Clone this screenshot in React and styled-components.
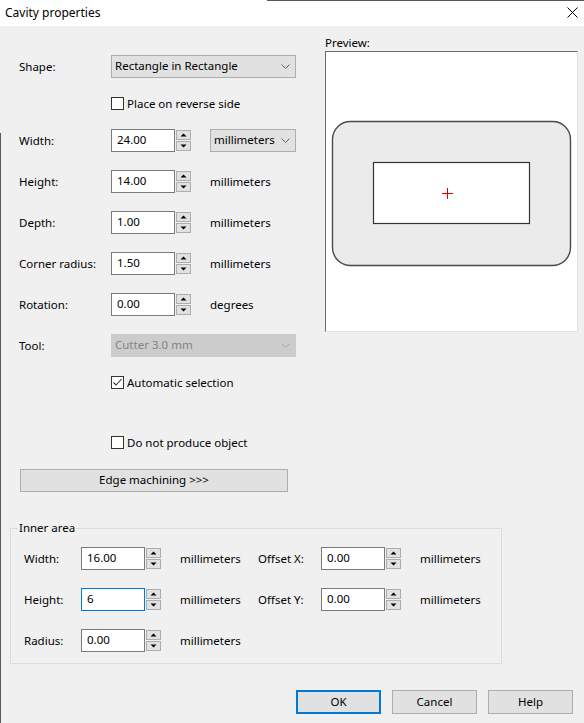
import React from 'react';
import styled, { createGlobalStyle } from 'styled-components';

const Global = createGlobalStyle`
  html, body { margin: 0; padding: 0; }
  body {
    width: 584px; height: 723px; overflow: hidden;
    background: #f0f0f0;
    font-family: "Segoe UI", "Noto Sans", sans-serif;
    font-size: 11.5px;
    color: #000;
  }
  * { box-sizing: border-box; }
`;

const Window = styled.div`
  position: relative;
  width: 584px;
  height: 723px;
  background: #f0f0f0;
  display: flex;
  flex-direction: column;
  &::before {
    content: "";
    position: absolute;
    left: 0; top: 133px; bottom: 0;
    width: 1px;
    background: #5c5c5c;
  }
`;

const TitleBar = styled.div`
  position: relative;
  height: 26px;
  flex: none;
  background: #fff;
  display: flex;
  align-items: center;
  justify-content: space-between;
  padding: 0 6px 1px 5px;
  font-size: 12px;
  &::after {
    content: "";
    position: absolute;
    top: 0; left: 267px; right: 0;
    height: 1px;
    background: #5a5a5a;
  }
`;

const Title = styled.span`
  line-height: 16px;
`;

const CloseBtn = styled.span`
  display: flex;
  width: 12px;
  height: 12px;
  align-items: center;
  justify-content: center;
`;

const TopSection = styled.div`
  display: flex;
  padding-left: 19px;
`;

const LeftCol = styled.div`
  width: 277px;
  padding-top: 29px;
  display: flex;
  flex-direction: column;
`;

const FormRow = styled.div`
  display: grid;
  grid-template-columns: 92px 1fr;
  align-items: center;
  height: 23px;
  margin-top: ${p => p.$mt || 0}px;
`;

const CheckRow = styled.label`
  display: flex;
  align-items: center;
  gap: 3px;
  height: 13px;
  margin-left: 92px;
  margin-top: ${p => p.$mt || 0}px;
  line-height: 16px;
`;

const Label = styled.span`
  line-height: 16px;
  white-space: nowrap;
`;

const Box = styled.span`
  width: 13px;
  height: 13px;
  flex: none;
  border: 1px solid #333;
  background: #fff;
  display: flex;
  align-items: center;
  justify-content: center;
`;

const Combo = styled.div`
  width: ${p => p.$w}px;
  height: 23px;
  border: 1px solid ${p => (p.$disabled ? '#cccccc' : '#adadad')};
  background: ${p => (p.$disabled ? '#cccccc' : '#e1e1e1')};
  color: ${p => (p.$disabled ? '#838383' : '#000')};
  display: flex;
  align-items: center;
  justify-content: space-between;
  padding: 0 5px 1px 3px;
  line-height: 16px;
`;

const FieldLine = styled.div`
  display: flex;
  align-items: center;
`;

const Spin = styled.div`
  display: flex;
  align-items: flex-start;
  width: ${p => p.$w || 99}px;
  flex: none;
`;

const Input = styled.div`
  width: 64px;
  height: 23px;
  border: 1px solid ${p => (p.$focus ? '#0078d7' : '#7a7a7a')};
  background: #fff;
  padding: 0 0 1px 5px;
  display: flex;
  align-items: center;
  line-height: 16px;
`;

const SpinButtons = styled.div`
  margin-left: 1px;
  padding-top: 1px;
  display: flex;
  flex-direction: column;
  gap: 1px;
`;

const SpinBtn = styled.div`
  width: 15px;
  height: 10px;
  border: 1px solid #adadad;
  background: #e1e1e1;
  display: flex;
  align-items: center;
  justify-content: center;
`;

const PreviewCol = styled.div`
  margin-left: 29px;
  padding-top: 9px;
  display: flex;
  flex-direction: column;
`;

const PreviewBox = styled.div`
  width: 253px;
  height: 281px;
  background: #fff;
  border-top: 1px solid #6d6d6d;
  border-left: 1px solid #6d6d6d;
  border-right: 1px solid #e3e3e3;
  border-bottom: 1px solid #e3e3e3;
  display: flex;
`;

const PushButton = styled.button`
  font: inherit;
  color: #000;
  width: ${p => p.$w}px;
  height: ${p => p.$h || 23}px;
  margin: 0;
  margin-left: ${p => p.$ml || 0}px;
  margin-top: ${p => p.$mt || 0}px;
  padding: 0 0 1px;
  background: #e1e1e1;
  border: ${p => (p.$default ? '2px solid #0078d7' : '1px solid #adadad')};
  border-radius: 0;
  line-height: 16px;
  text-align: center;
`;

const Group = styled.fieldset`
  margin: 28px 0 0 10px;
  width: 492px;
  border: 1px solid #dcdcdc;
  padding: 11px 0 11px 13px;
  min-width: 0;
`;

const Legend = styled.legend`
  margin-left: -6px;
  padding: 0 1px;
  line-height: 16px;
`;

const GroupGrid = styled.div`
  display: grid;
  grid-template-columns: 57px 99px 78px 63px 99px auto;
  grid-auto-rows: 23px;
  row-gap: 18px;
  align-items: center;
`;

const Footer = styled.div`
  display: flex;
  justify-content: flex-end;
  gap: 11px;
  padding-right: 11px;
  margin-top: 26px;
`;

const Chevron = ({ color = '#606060' }) => (
  <svg width="9" height="5" viewBox="0 0 9 5">
    <polyline points="0.5,0.5 4.5,4.5 8.5,0.5" fill="none" stroke={color} strokeWidth="1" />
  </svg>
);

const Arrow = ({ up }) => (
  <svg width="7" height="4" viewBox="0 0 7 4">
    <polygon points={up ? '0.5,3.5 3.5,0.5 6.5,3.5' : '0.5,0.5 3.5,3.5 6.5,0.5'} fill="#000" />
  </svg>
);

const Check = ({ checked }) => (
  <Box>
    {checked && (
      <svg width="11" height="11" viewBox="0 0 11 11">
        <polyline points="1.5,5.5 4,8 9.5,2" fill="none" stroke="#333" strokeWidth="1.1" />
      </svg>
    )}
  </Box>
);

const SpinField = ({ value, focus, w }) => (
  <Spin $w={w}>
    <Input $focus={focus}>{value}</Input>
    <SpinButtons>
      <SpinBtn><Arrow up /></SpinBtn>
      <SpinBtn><Arrow /></SpinBtn>
    </SpinButtons>
  </Spin>
);

const fields = [
  { label: 'Height:', value: '14.00', unit: 'millimeters' },
  { label: 'Depth:', value: '1.00', unit: 'millimeters' },
  { label: 'Corner radius:', value: '1.50', unit: 'millimeters' },
  { label: 'Rotation:', value: '0.00', unit: 'degrees' },
];

export default function App() {
  return (
    <Window>
      <Global />
      <TitleBar>
        <Title>Cavity properties</Title>
        <CloseBtn>
          <svg width="11" height="11" viewBox="0 0 11 11">
            <path d="M0.5 0.5 L10.5 10.5 M10.5 0.5 L0.5 10.5" stroke="#000" strokeWidth="1" fill="none" />
          </svg>
        </CloseBtn>
      </TitleBar>

      <TopSection>
        <LeftCol>
          <FormRow>
            <Label>Shape:</Label>
            <Combo $w={185}>
              <span>Rectangle in Rectangle</span>
              <Chevron />
            </Combo>
          </FormRow>
          <CheckRow $mt={19}>
            <Check />
            <Label>Place on reverse side</Label>
          </CheckRow>
          <FormRow $mt={19}>
            <Label>Width:</Label>
            <FieldLine>
              <SpinField value="24.00" />
              <Combo $w={86}>
                <span>millimeters</span>
                <Chevron />
              </Combo>
            </FieldLine>
          </FormRow>
          {fields.map(f => (
            <FormRow key={f.label} $mt={18}>
              <Label>{f.label}</Label>
              <FieldLine>
                <SpinField value={f.value} />
                <Label>{f.unit}</Label>
              </FieldLine>
            </FormRow>
          ))}
          <FormRow $mt={18}>
            <Label>Tool:</Label>
            <Combo $w={185} $disabled>
              <span>Cutter 3.0 mm</span>
              <Chevron color="#a8a8a8" />
            </Combo>
          </FormRow>
          <CheckRow $mt={19}>
            <Check checked />
            <Label>Automatic selection</Label>
          </CheckRow>
          <CheckRow $mt={47}>
            <Check />
            <Label>Do not produce object</Label>
          </CheckRow>
          <PushButton $w={268} $ml={1} $mt={20}>Edge machining &gt;&gt;&gt;</PushButton>
        </LeftCol>

        <PreviewCol>
          <Label>Preview:</Label>
          <PreviewBox>
            <svg width="251" height="279" viewBox="0 0 251 279">
              <rect x="6.5" y="69.5" width="238" height="144" rx="18" ry="18" fill="#ebebeb" stroke="#4a4a4a" strokeWidth="1.4" />
              <rect x="47.5" y="110.5" width="156" height="61" fill="#fff" stroke="#333" strokeWidth="1.2" />
              <path d="M116 141.5 H127 M121.5 136 V147" stroke="#e00000" strokeWidth="1" />
            </svg>
          </PreviewBox>
        </PreviewCol>
      </TopSection>

      <Group>
        <Legend>Inner area</Legend>
        <GroupGrid>
          <Label>Width:</Label>
          <SpinField value="16.00" />
          <Label>millimeters</Label>
          <Label>Offset X:</Label>
          <SpinField value="0.00" />
          <Label>millimeters</Label>

          <Label>Height:</Label>
          <SpinField value="6" focus />
          <Label>millimeters</Label>
          <Label>Offset Y:</Label>
          <SpinField value="0.00" />
          <Label>millimeters</Label>

          <Label>Radius:</Label>
          <SpinField value="0.00" />
          <Label>millimeters</Label>
        </GroupGrid>
      </Group>

      <Footer>
        <PushButton $w={85} $h={24} $default>OK</PushButton>
        <PushButton $w={85} $h={24}>Cancel</PushButton>
        <PushButton $w={85} $h={24}>Help</PushButton>
      </Footer>
    </Window>
  );
}
